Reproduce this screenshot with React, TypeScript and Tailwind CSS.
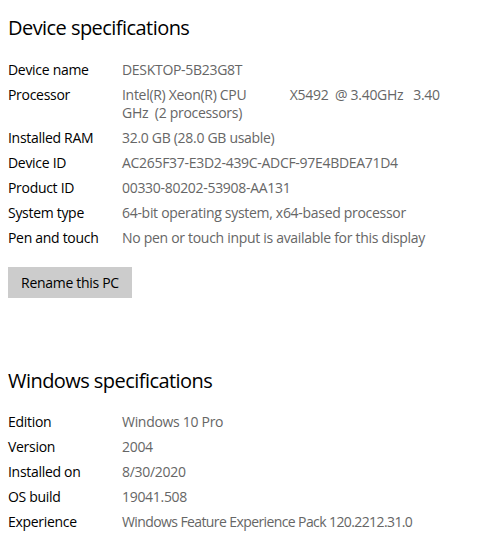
import React from "react";

const font = { fontFamily: '"Open Sans", "Noto Sans", "Liberation Sans", sans-serif' };

function Row({ label, children, vc = "" }: { label: string; children: React.ReactNode; vc?: string }) {
  return (
    <div className="flex text-[14px] leading-[18px]">
      <div className="w-[114px] shrink-0 text-black">{label}</div>
      <div className={"text-[#666666] whitespace-pre " + vc}>{children}</div>
    </div>
  );
}

export default function App() {
  return (
    <div className="w-[489px] h-[536px] bg-white overflow-hidden pl-[8px]" style={font}>
      <h1 className="pt-[13px] text-[20px] leading-[30px] text-black font-normal tracking-[-0.55px]">
        Device specifications
      </h1>
      <div className="mt-[18px] flex flex-col gap-[7px] tracking-[-0.3px]">
        <Row label="Device name">DESKTOP-5B23G8T</Row>
        <Row label="Processor">
          {"Intel(R) Xeon(R) CPU             X5492  @ 3.40GHz   3.40\nGHz  (2 processors)"}
        </Row>
        <Row label="Installed RAM">32.0 GB (28.0 GB usable)</Row>
        <Row label="Device ID">AC265F37-E3D2-439C-ADCF-97E4BDEA71D4</Row>
        <Row label="Product ID">00330-80202-53908-AA131</Row>
        <Row label="System type">64-bit operating system, x64-based processor</Row>
        <Row label="Pen and touch">No pen or touch input is available for this display</Row>
      </div>
      <button className="mt-[20px] w-[124px] h-[31px] bg-[#cccccc] text-[14px] text-black tracking-[-0.3px]">
        Rename this PC
      </button>
      <h1 className="mt-[68px] text-[20px] leading-[30px] text-black font-normal tracking-[-0.55px]">
        Windows specifications
      </h1>
      <div className="mt-[17px] flex flex-col gap-[7px] tracking-[-0.3px]">
        <Row label="Edition">Windows 10 Pro</Row>
        <Row label="Version">2004</Row>
        <Row label="Installed on">8/30/2020</Row>
        <Row label="OS build">19041.508</Row>
        <Row label="Experience" vc="tracking-[-0.6px]">Windows Feature Experience Pack 120.2212.31.0</Row>
      </div>
    </div>
  );
}
